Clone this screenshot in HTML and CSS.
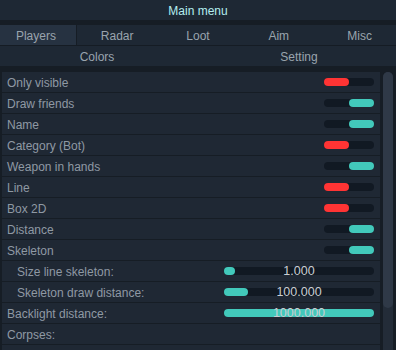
FILE: index.html
```html
<!DOCTYPE html>
<html lang="en">
<head>
    <meta charset="UTF-8">
    <title>Main menu</title>
    <link rel="stylesheet" href="styles.css">
</head>
<body>
    <div class="title">Main menu</div>

    <!-- Tabs -->
    <div class="tabs">
        <div class="tab active">Players</div>
        <div class="tab">Radar</div>
        <div class="tab">Loot</div>
        <div class="tab">Aim</div>
        <div class="tab">Misc</div>
    </div>
    <div class="subtabs">
        <div class="tab">Colors</div>
        <div class="tab">Setting</div>
    </div>

    <!-- Options -->
    <div class="panel">
        <ul class="list">
            <li class="row">Only visible<span class="toggle off"></span></li>
            <li class="row">Draw friends<span class="toggle on"></span></li>
            <li class="row">Name<span class="toggle on"></span></li>
            <li class="row">Category (Bot)<span class="toggle off"></span></li>
            <li class="row">Weapon in hands<span class="toggle on"></span></li>
            <li class="row">Line<span class="toggle off"></span></li>
            <li class="row">Box 2D<span class="toggle off"></span></li>
            <li class="row">Distance<span class="toggle on"></span></li>
            <li class="row">Skeleton<span class="toggle on"></span></li>
            <li class="row sub">Size line skeleton:
                <span class="slider"><span class="fill" style="width: 7%"></span><span class="value">1.000</span></span>
            </li>
            <li class="row sub">Skeleton draw distance:
                <span class="slider"><span class="fill" style="width: 16%"></span><span class="value">100.000</span></span>
            </li>
            <li class="row">Backlight distance:
                <span class="slider"><span class="fill" style="width: 100%"></span><span class="value">1000.000</span></span>
            </li>
            <li class="row">Corpses:</li>
            <li class="row sub"></li>
        </ul>
        <div class="scrollbar"><div class="thumb"></div></div>
    </div>
</body>
</html>
```

FILE: styles.css
```css
html, body {
    margin: 0;
    padding: 0;
}
body {
    width: 396px;
    height: 350px;
    overflow: hidden;
    background-color: #161d25;
    font-family: "Liberation Sans", Arial, sans-serif;
    font-size: 12px;
    color: #8f99a4;
}
.title {
    height: 20px;
    line-height: 23px;
    text-align: center;
    background-color: #1e2834;
    color: #b4eef0;
}
.tabs, .subtabs {
    display: grid;
    margin-left: -4px;
    width: 404px;
}
.tabs {
    grid-template-columns: repeat(5, 1fr);
    margin-top: 5px;
    border-bottom: 1px solid #151c24;
}
.subtabs {
    grid-template-columns: repeat(2, 1fr);
}
.tab {
    height: 20px;
    line-height: 22px;
    text-align: center;
    background-color: #1e2834;
    color: #9aa4ae;
}
.tab.active {
    background-color: #263241;
    margin-right: 1px;
}
.panel {
    display: flex;
    margin-top: 6px;
}
.list {
    list-style: none;
    margin: 0 3px 0 2px;
    padding: 0;
    width: 378px;
}
.row {
    position: relative;
    height: 20px;
    line-height: 22px;
    padding-left: 5px;
    margin-bottom: 1px;
    background-color: #1f2834;
    white-space: nowrap;
}
.row.sub {
    padding-left: 15px;
}
.toggle {
    position: absolute;
    right: 6px;
    top: 6px;
    width: 50px;
    height: 8px;
    border-radius: 4px;
    background-color: #111923;
}
.toggle::after {
    content: "";
    position: absolute;
    top: 0;
    width: 25px;
    height: 8px;
    border-radius: 4px;
}
.toggle.off::after {
    left: 0;
    background-color: #ff3434;
}
.toggle.on::after {
    right: 0;
    background-color: #42c9bb;
}
.slider {
    position: absolute;
    right: 6px;
    top: 6px;
    width: 150px;
    height: 8px;
    border-radius: 4px;
    background-color: #111923;
}
.fill {
    position: absolute;
    left: 0;
    top: 0;
    height: 8px;
    border-radius: 4px;
    background-color: #42c9bb;
}
.value {
    position: absolute;
    left: 0;
    right: 0;
    top: -7px;
    line-height: 22px;
    text-align: center;
    font-size: 12.5px;
    color: #c9cdd2;
}
.scrollbar {
    width: 10px;
    height: 290px;
    border-radius: 5px;
    background-color: #232c38;
}
.thumb {
    height: 236px;
    border-radius: 5px;
    background-color: #2f3947;
}
```
